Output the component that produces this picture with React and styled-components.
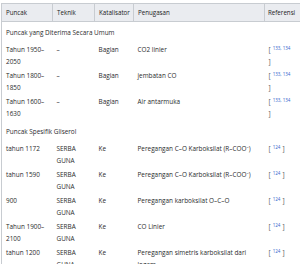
import React from "react";
import styled, { createGlobalStyle } from "styled-components";

const GlobalStyle = createGlobalStyle`
    html, body {
        margin: 0;
        padding: 0;
        background: #ffffff;
    }
    body {
        font-family: "Open Sans", "Noto Sans", sans-serif;
        color: #202122;
        overflow: hidden;
    }
`;

const Page = styled.div`
    width: 300px;
    height: 264px;
    overflow: hidden;
    padding: 3px 0 0 1px;
    box-sizing: border-box;
`;

const Table = styled.table`
    border-collapse: collapse;
    table-layout: fixed;
    width: 316px;
    font-size: 6.4px;
    line-height: 12px;
    border-left: 1px solid #c8ccd1;
`;

const HeadCell = styled.th`
    background: #eaecf0;
    border: 1px solid #c8ccd1;
    border-left: ${({ $first }) => ($first ? "none" : "1px solid #c8ccd1")};
    height: 17px;
    padding: 0 3px 0 ${({ $tight }) => ($tight ? "3px" : "4px")};
    text-align: left;
    font-weight: 400;
    font-size: 6.2px;
    color: #202122;
    white-space: nowrap;
`;

const Cell = styled.td`
    padding: 1px 4px;
    vertical-align: top;
    color: #2a2b2c;
    font-weight: 400;
`;

const GroupCell = styled.td`
    padding: 4.5px 4px;
    color: #2a2b2c;
`;

const Bracket = styled.span`
    color: #54595d;
    font-size: 6.5px;
`;

const Sup = styled.sup`
    color: #3366cc;
    font-size: 4.5px;
    vertical-align: 2.5px;
    line-height: 0;
    margin: 0 2px;
`;

const groups = [
    {
        title: "Puncak yang Diterima Secara Umum",
        rows: [
            ["Tahun 1950–\n2050", "–", "Bagian", "CO2 linier", "133, 134", true],
            ["Tahun 1800–\n1850", "–", "Bagian", "jembatan CO", "133, 134", true],
            ["Tahun 1600–\n1630", "–", "Bagian", "Air antarmuka", "133, 134", true],
        ],
    },
    {
        title: "Puncak Spesifik Gliserol",
        rows: [
            ["tahun 1172", "SERBA\nGUNA", "Ke", "Peregangan C–O Karboksilat (R–COO⁻)", "124"],
            ["tahun 1590", "SERBA\nGUNA", "Ke", "Peregangan C–O Karboksilat (R–COO⁻)", "124"],
            ["900", "SERBA\nGUNA", "Ke", "Peregangan karboksilat O–C–O", "124"],
            ["Tahun 1900–\n2100", "SERBA\nGUNA", "Ke", "CO Linier", "124"],
            ["tahun 1200", "SERBA\nGUNA", "Ke", "Peregangan simetris karboksilat dari\nlogam", "124"],
        ],
    },
];

const Lines = ({ text }) =>
    text.split("\n").map((line, i) => (
        <React.Fragment key={i}>
            {i > 0 && <br />}
            {line}
        </React.Fragment>
    ));

const Ref = ({ nums, wrap }) => (
    <>
        <Bracket>[</Bracket>
        <Sup>{nums}</Sup>
        {wrap && <br />}
        <Bracket>]</Bracket>
    </>
);

export default function App() {
    return (
        <>
            <GlobalStyle />
            <Page>
                <Table>
                    <colgroup>
                        <col style={{ width: 51 }} />
                        <col style={{ width: 42 }} />
                        <col style={{ width: 39 }} />
                        <col style={{ width: 131 }} />
                        <col style={{ width: 53 }} />
                    </colgroup>
                    <thead>
                        <tr>
                            <HeadCell $first>Puncak</HeadCell>
                            <HeadCell>Teknik</HeadCell>
                            <HeadCell>Katalisator</HeadCell>
                            <HeadCell>Penugasan</HeadCell>
                            <HeadCell $tight>Referensi</HeadCell>
                        </tr>
                    </thead>
                    <tbody>
                        {groups.map((group) => (
                            <React.Fragment key={group.title}>
                                <tr>
                                    <GroupCell colSpan={5}>{group.title}</GroupCell>
                                </tr>
                                {group.rows.map((row, i) => (
                                    <tr key={i}>
                                        <Cell><Lines text={row[0]} /></Cell>
                                        <Cell><Lines text={row[1]} /></Cell>
                                        <Cell>{row[2]}</Cell>
                                        <Cell><Lines text={row[3]} /></Cell>
                                        <Cell><Ref nums={row[4]} wrap={row[5]} /></Cell>
                                    </tr>
                                ))}
                            </React.Fragment>
                        ))}
                    </tbody>
                </Table>
            </Page>
        </>
    );
}
